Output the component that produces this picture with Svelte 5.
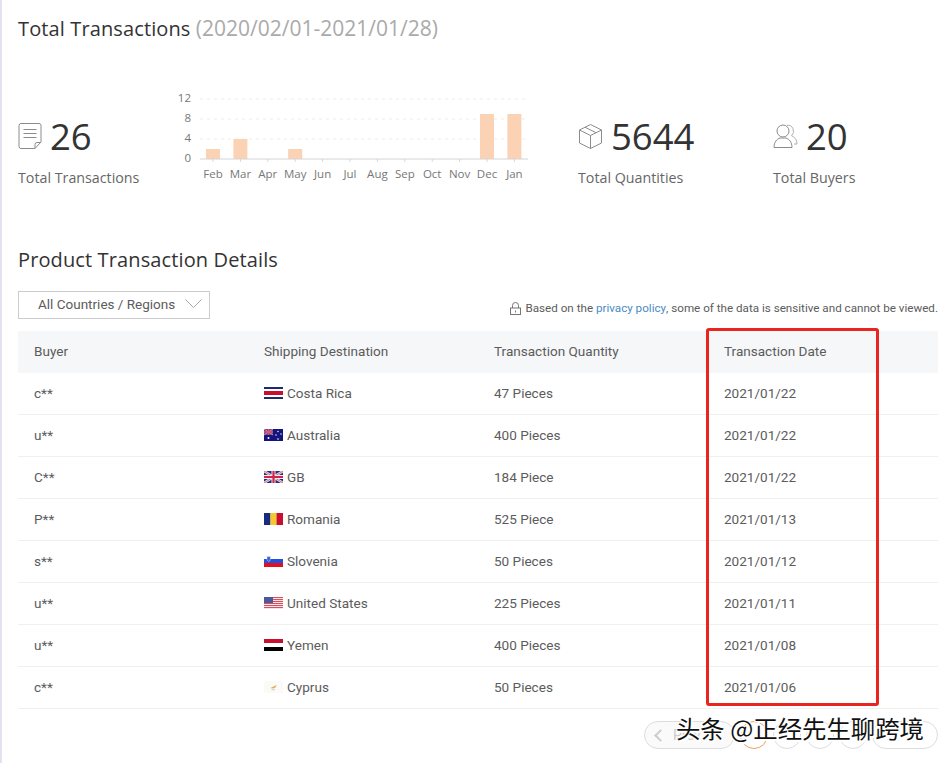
<script>
  const months = ['Feb','Mar','Apr','May','Jun','Jul','Aug','Sep','Oct','Nov','Dec','Jan'];
  const counts = [2,4,0,2,0,0,0,0,0,0,9,9];
  const ticks = [12,8,4,0];

  const rows = [
    { buyer: 'c**', flag: 'cr', country: 'Costa Rica', qty: '47 Pieces', date: '2021/01/22' },
    { buyer: 'u**', flag: 'au', country: 'Australia', qty: '400 Pieces', date: '2021/01/22' },
    { buyer: 'C**', flag: 'gb', country: 'GB', qty: '184 Piece', date: '2021/01/22' },
    { buyer: 'P**', flag: 'ro', country: 'Romania', qty: '525 Piece', date: '2021/01/13' },
    { buyer: 's**', flag: 'si', country: 'Slovenia', qty: '50 Pieces', date: '2021/01/12' },
    { buyer: 'u**', flag: 'us', country: 'United States', qty: '225 Pieces', date: '2021/01/11' },
    { buyer: 'u**', flag: 'ye', country: 'Yemen', qty: '400 Pieces', date: '2021/01/08' },
    { buyer: 'c**', flag: 'cy', country: 'Cyprus', qty: '50 Pieces', date: '2021/01/06' }
  ];
</script>

{#snippet flag(code)}
  <svg class="flag" viewBox="0 0 19 12" width="19" height="12">
    {#if code === 'cr'}
      <rect width="19" height="12" fill="#fff" />
      <rect width="19" height="2" fill="#1c2c6e" />
      <rect y="10" width="19" height="2" fill="#1c2c6e" />
      <rect y="4" width="19" height="4" fill="#c8102e" />
    {:else if code === 'au'}
      <rect width="19" height="12" fill="#14147e" />
      <rect width="9" height="6" fill="#5a4a90" />
      <path d="M0 0l9 6M9 0L0 6" stroke="#e08a9a" stroke-width="1" />
      <path d="M4.5 0v6M0 3h9" stroke="#e8506a" stroke-width="1.4" />
      <circle cx="4.5" cy="9" r="1" fill="#fff" />
      <circle cx="14" cy="2.5" r=".7" fill="#fff" />
      <circle cx="17" cy="5" r=".7" fill="#fff" />
      <circle cx="12" cy="6" r=".7" fill="#fff" />
      <circle cx="14" cy="10" r=".8" fill="#fff" />
    {:else if code === 'gb'}
      <rect width="19" height="12" fill="#2a2a78" />
      <path d="M0 0l19 12M19 0L0 12" stroke="#e8e4ec" stroke-width="2.4" />
      <path d="M0 0l19 12M19 0L0 12" stroke="#c8506a" stroke-width=".8" />
      <path d="M9.5 0v12M0 6h19" stroke="#f0eef2" stroke-width="4" />
      <path d="M9.5 0v12M0 6h19" stroke="#d0254a" stroke-width="2.2" />
    {:else if code === 'ro'}
      <rect width="6.5" height="12" fill="#1a2a7c" />
      <rect x="6.5" width="6" height="12" fill="#f5c92c" />
      <rect x="12.5" width="6.5" height="12" fill="#c8102e" />
    {:else if code === 'si'}
      <rect width="19" height="4" fill="#fff" />
      <rect y="4" width="19" height="4" fill="#2450e0" />
      <rect y="8" width="19" height="4" fill="#e0101e" />
      <path d="M3 1.5h3.4v3q0 1.4-1.7 2-1.700-.6-1.700-2z" fill="#3a62c8" stroke="#e8e8f4" stroke-width=".5" />
    {:else if code === 'us'}
      <rect width="19" height="12" fill="#f6e4e6" />
      {#each [0,2,4,6,8,10] as y}
        <rect y={y} width="19" height="1" fill="#d8505e" />
      {/each}
      <rect width="9" height="6" fill="#4a5a98" />
    {:else if code === 'ye'}
      <rect width="19" height="4" fill="#c8102e" />
      <rect y="4" width="19" height="4" fill="#fff" />
      <rect y="8" width="19" height="4" fill="#000" />
    {:else}
      <rect width="19" height="12" rx="2" fill="#fbfaf6" />
      <path d="M6.5 7l4-2 2-1-1 2.500-2.500 1z" fill="#e6a860" />
      <path d="M7.500 8.500q2 .8 3.500 0" stroke="#a8b890" stroke-width=".6" fill="none" />
    {/if}
  </svg>
{/snippet}

<div class="page">
  <h2 class="title">Total Transactions <span>(2020/02/01-2021/01/28)</span></h2>

  <div class="stats">
    <div class="stat first">
      <div class="stat-top">
        <svg width="24" height="28" viewBox="0 0 24 28" fill="none" stroke="#8c8c8c" stroke-width="1">
          <path d="M3 1.500h18a2 2 0 0 1 2 2V20l-6 6.500H3a2 2 0 0 1-2-2v-21a2 2 0 0 1 2-2z" />
          <path d="M17 26.500v-4a2 2 0 0 1 2-2h4" />
          <path d="M5.500 7.500h13M5.500 11.500h13M5.500 15.500h13" />
        </svg>
        <span class="num">26</span>
      </div>
      <div class="label">Total Transactions</div>
    </div>

    <svg class="chart" width="362" height="100" viewBox="170 90 362 100">
      {#each ticks as t, i}
        <text class="tick" x="191" y={102 + i * 20} text-anchor="end">{t}</text>
        {#if t > 0}
          <line x1="200" x2="527" y1={99 + i * 20} y2={99 + i * 20} stroke="#ececec" stroke-dasharray="3 4" />
        {/if}
      {/each}
      {#each counts as c, i}
        {#if c > 0}
          <rect x={206 + i * 27.4} y={159 - c * 5} width="14" height={c * 5} fill="#fcd2b4" />
        {/if}
        <line x1={213 + i * 27.4} x2={213 + i * 27.4} y1="159" y2="162" stroke="#d8d8d8" />
        <text class="tick" x={213 + i * 27.4} y="178" text-anchor="middle">{months[i]}</text>
      {/each}
      <line x1="200" x2="528" y1="159" y2="159" stroke="#d4d4d4" />
    </svg>

    <div class="stat qty">
      <div class="stat-top">
        <svg width="25" height="27" viewBox="0 0 25 27" fill="none" stroke="#8c8c8c" stroke-width="1">
          <path d="M12.500 1.500l11 5.500v13l-11 5.500-11-5.500V7z" />
          <path d="M1.500 7l11 5.500 11-5.500M12.500 12.500v13" />
          <path d="M7 4.200l11 5.500" />
        </svg>
        <span class="num">5644</span>
      </div>
      <div class="label">Total Quantities</div>
    </div>

    <div class="stat buyers">
      <div class="stat-top">
        <svg width="25" height="26" viewBox="0 0 25 26" fill="none" stroke="#8c8c8c" stroke-width="1">
          <circle cx="10" cy="8" r="6" />
          <path d="M1 24.500c0-5.500 3-8.500 6-9.500h6c3 1 6 4 6 9.500z" />
          <path d="M14 2.200a6 6 0 0 1 4.500 10.500c3 1 5.500 4 5.500 8.300h-3" stroke="#b0b0b0" />
        </svg>
        <span class="num">20</span>
      </div>
      <div class="label">Total Buyers</div>
    </div>
  </div>

  <h2 class="section">Product Transaction Details</h2>

  <div class="filters">
    <div class="select">
      <span>All Countries / Regions</span>
      <svg width="17" height="10" viewBox="0 0 17 10" fill="none" stroke="#a8a8a8">
        <path d="M.5.500l8 8 8-8" />
      </svg>
    </div>
    <div class="note">
      <svg width="11" height="13" viewBox="0 0 11 13" fill="none" stroke="#777">
        <path d="M2.500 6V3.500a3 3 0 0 1 6 0V6" />
        <rect x=".5" y="6" width="10" height="6.500" />
        <path d="M5.500 8.500v2" />
      </svg>
      Based on the <span class="link">privacy policy</span>, some of the data is sensitive and cannot be viewed.
    </div>
  </div>

  <div class="table-wrap">
    <table>
      <thead>
        <tr>
          <th>Buyer</th>
          <th>Shipping Destination</th>
          <th>Transaction Quantity</th>
          <th>Transaction Date</th>
        </tr>
      </thead>
      <tbody>
        {#each rows as r}
          <tr>
            <td>{r.buyer}</td>
            <td><span class="dest">{@render flag(r.flag)}{r.country}</span></td>
            <td>{r.qty}</td>
            <td>{r.date}</td>
          </tr>
        {/each}
      </tbody>
    </table>
    <div class="highlight"></div>
  </div>

  <div class="pager">
    <span class="pill prev"><i class="chev"></i>Prev</span>
    <span class="dot current"></span>
    <span class="dot"></span>
    <span class="dot"></span>
    <span class="dot"></span>
    <span class="pill next"></span>
    <div class="watermark">头条 @正经先生聊跨境</div>
  </div>
</div>

<style>
  :global(body) {
    margin: 0;
    background: #fff;
  }

  .page {
    box-sizing: border-box;
    width: 944px;
    height: 763px;
    overflow: hidden;
    padding: 15px 6px 0 16px;
    border-left: 2px solid #e2e2f0;
    font-family: "Roboto", "Liberation Sans", sans-serif;
    color: #555;
  }

  .title, .section {
    margin: 0;
    font-family: "Open Sans", "Liberation Sans", sans-serif;
    font-weight: 400;
    font-size: 20px;
    line-height: 27px;
    letter-spacing: .12px;
    color: #333;
  }

  .title span {
    font-size: 21px;
    letter-spacing: 0;
    color: #aaa;
  }

  .stats {
    display: flex;
    height: 148px;
    margin-top: 48px;
    align-items: flex-start;
  }

  .stat {
    font-family: "Open Sans", "Liberation Sans", sans-serif;
    padding-top: 22px;
  }

  .first { width: 152px; }
  .qty { width: 195px; margin-left: 46px; }

  .stat-top {
    display: flex;
    align-items: center;
    height: 48px;
    gap: 8px;
  }

  .num {
    font-size: 36.5px;
    line-height: 48px;
    color: #333;
  }

  .label {
    margin-top: 8px;
    font-size: 14.25px;
    line-height: 19px;
    color: #666;
  }

  .chart {
    display: block;
    flex: none;
  }

  .tick {
    font-family: "Open Sans", "Liberation Sans", sans-serif;
    font-size: 11.5px;
    fill: #777;
  }

  .section {
    margin-top: 8px;
  }

  .filters {
    display: flex;
    justify-content: space-between;
    align-items: flex-end;
    margin-top: 18px;
    height: 28px;
  }

  .select {
    box-sizing: border-box;
    width: 192px;
    height: 28px;
    display: flex;
    align-items: center;
    justify-content: space-between;
    padding: 0 7px 2px 19px;
    border: 1px solid #ccc;
    font-size: 13.5px;
    color: #5c5c5c;
  }

  .note {
    display: flex;
    align-items: center;
    margin-bottom: 3px;
    white-space: pre-wrap;
    font-size: 11.65px;
    line-height: 16px;
    color: #5c5c5c;
  }

  .note svg {
    margin-right: 2px;
  }

  .link {
    color: #4a8cc4;
  }

  .table-wrap {
    position: relative;
    margin-top: 12px;
  }

  table {
    width: 920px;
    border-collapse: collapse;
    table-layout: fixed;
    font-size: 13.55px;
  }

  th {
    height: 40px;
    padding: 0 16px 2px;
    background: #f6f7f9;
    font-weight: 400;
    text-align: left;
    color: #5c5c5c;
  }

  td {
    height: 39px;
    padding: 0 16px 2px;
    border-bottom: 1px solid #f0f0f0;
    color: #5c5c5c;
  }

  .dest {
    display: flex;
    align-items: center;
    gap: 4px;
  }

  .flag {
    display: block;
    flex: none;
  }

  .highlight {
    position: absolute;
    left: 688px;
    top: -3px;
    width: 173px;
    height: 378px;
    box-sizing: border-box;
    border: 3px solid #e8251f;
    border-radius: 3px;
  }

  .pager {
    position: relative;
    display: flex;
    justify-content: flex-end;
    align-items: center;
    gap: 5px;
    margin-top: 12px;
    height: 28px;
    font-size: 14px;
    color: #999;
  }

  .pill, .dot {
    box-sizing: border-box;
    height: 28px;
    border: 1px solid #ddd;
    border-radius: 14px;
    display: flex;
    align-items: center;
    justify-content: center;
  }

  .dot { width: 28px; }

  .prev {
    width: 91px;
    justify-content: flex-start;
    padding-left: 11px;
    gap: 8px;
    color: #ccc;
    background: #fafafa;
  }

  .next { width: 66px; }

  .current {
    border-color: #f0a060;
  }

  .chev {
    width: 7px;
    height: 7px;
    border-left: 2px solid #ccc;
    border-bottom: 2px solid #ccc;
    transform: rotate(45deg);
  }

  .watermark {
    position: absolute;
    right: 14px;
    top: -8px;
    font-family: "Noto Sans CJK SC", sans-serif;
    font-size: 24.4px;
    line-height: 30px;
    white-space: nowrap;
    color: #111;
    text-shadow: 1px 1px 0 #fff, -1px -1px 0 #fff, 1px -1px 0 #fff, -1px 1px 0 #fff, 2px 2px 0 #fff;
  }
</style>
